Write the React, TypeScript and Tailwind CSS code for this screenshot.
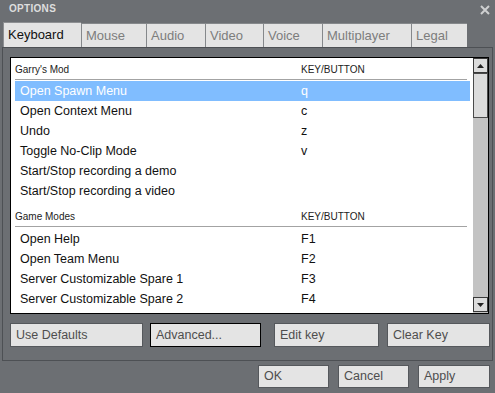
import React from "react";

const font = { fontFamily: '"Liberation Sans", Arial, sans-serif' };

const tabs = [
  { label: "Keyboard", w: "w-[78px]", active: true },
  { label: "Mouse", w: "w-[65px]" },
  { label: "Audio", w: "w-[59px]" },
  { label: "Video", w: "w-[58px]" },
  { label: "Voice", w: "w-[59px]" },
  { label: "Multiplayer", w: "w-[89px]" },
  { label: "Legal", w: "w-[56px]" },
];

const sections = [
  {
    title: "Garry's Mod",
    first: true,
    rows: [
      ["Open Spawn Menu", "q"],
      ["Open Context Menu", "c"],
      ["Undo", "z"],
      ["Toggle No-Clip Mode", "v"],
      ["Start/Stop recording a demo", ""],
      ["Start/Stop recording a video", ""],
    ],
  },
  {
    title: "Game Modes",
    first: false,
    rows: [
      ["Open Help", "F1"],
      ["Open Team Menu", "F2"],
      ["Server Customizable Spare 1", "F3"],
      ["Server Customizable Spare 2", "F4"],
    ],
  },
];

function Btn({ label, w, focused }: { label: string; w: string; focused?: boolean }) {
  return (
    <div
      className={`${w} h-full flex items-center pl-[5px] bg-[#e4e4e4] text-[12.5px] text-[#4e4e4e] border ${
        focused ? "border-black" : "border-[#55585c]"
      }`}
    >
      {label}
    </div>
  );
}

export default function App() {
  return (
    <div className="w-[495px] h-[393px] bg-[#6c6f73] flex flex-col overflow-hidden" style={font}>
      {/* title bar */}
      <div className="h-[22px] flex items-start justify-between pl-[9px] pr-[5px] pt-[3px]">
        <span className="text-[10px] font-bold text-[#dedede] leading-[12px] tracking-[0.3px]">OPTIONS</span>
        <svg width="10" height="10" viewBox="0 0 10 10" className="mt-[2px]">
          <path d="M1 1 L9 9 M9 1 L1 9" stroke="#cfd0d1" strokeWidth="2" />
        </svg>
      </div>

      {/* tabs */}
      <div className="h-[25px] flex items-end pl-[3px]">
        {tabs.map((t) => (
          <div
            key={t.label}
            className={`${t.w} ${
              t.active ? "h-[25px] text-[#111] border-[#8e9093]" : "h-[24px] text-[#7d7d7d] border-[#85888b]"
            } bg-[#e4e4e4] border-l border-t flex items-center pl-[4px] text-[13px]`}
          >
            {t.label}
          </div>
        ))}
      </div>

      {/* panel */}
      <div className="ml-[2px] w-[491px] h-[314px] border border-[#4d5054] pt-[9px] pl-[7px] flex flex-col">
        <div className="w-[479px] h-[257px] border border-black bg-white flex">
          <div className="flex-1 flex flex-col">
            {sections.map((s) => (
              <div key={s.title} className="flex flex-col">
                <div
                  className={`ml-[4px] w-[452px] ${
                    s.first ? "h-[22px]" : "h-[26px]"
                  } flex items-end pb-[3px] border-b border-[#a3a3a3] text-[10px] leading-[12px] text-[#222]`}
                >
                  <span className="w-[286px]">{s.title}</span>
                  <span>KEY/BUTTON</span>
                </div>
                <div className={`flex flex-col ${s.first ? "mt-[1px]" : "mt-[2px]"}`}>
                  {s.rows.map(([a, k], i) => {
                    const sel = s.first && i === 0;
                    return (
                      <div
                        key={a}
                        className={`ml-[4px] w-[455px] h-[20px] flex items-center text-[12.5px] ${
                          sel ? "bg-[#80bdff] text-white" : "text-[#111]"
                        }`}
                      >
                        <span className="w-[286px] pl-[5px]">{a}</span>
                        <span>{k}</span>
                      </div>
                    );
                  })}
                </div>
              </div>
            ))}
          </div>
          {/* scrollbar */}
          <div className="w-[15px] bg-[#c3c3c3] flex flex-col">
            <div className="h-[15px] bg-[#dcdcdc] border border-[#3a3a3a] flex items-center justify-center">
              <svg width="7" height="4" viewBox="0 0 7 4">
                <path d="M3.5 0 L7 4 L0 4 Z" fill="#222" />
              </svg>
            </div>
            <div className="h-[45px] bg-[#dcdcdc] border border-[#4a4a4a]" />
            <div className="flex-1" />
            <div className="h-[15px] bg-[#dcdcdc] border border-[#3a3a3a] flex items-center justify-center">
              <svg width="7" height="4" viewBox="0 0 7 4">
                <path d="M0 0 L7 0 L3.5 4 Z" fill="#222" />
              </svg>
            </div>
            <div className="h-[1px]" />
          </div>
        </div>

        <div className="h-[24px] mt-[9px] flex">
          <Btn label="Use Defaults" w="w-[133px]" />
          <div className="w-[7px]" />
          <Btn label="Advanced..." w="w-[111px]" focused />
          <div className="w-[13px]" />
          <Btn label="Edit key" w="w-[105px]" />
          <div className="w-[8px]" />
          <Btn label="Clear Key" w="w-[103px]" />
        </div>
      </div>

      {/* bottom buttons */}
      <div className="h-[23px] mt-[4px] flex pl-[258px]">
        <Btn label="OK" w="w-[71px]" />
        <div className="w-[9px]" />
        <Btn label="Cancel" w="w-[71px]" />
        <div className="w-[9px]" />
        <Btn label="Apply" w="w-[72px]" />
      </div>
    </div>
  );
}
